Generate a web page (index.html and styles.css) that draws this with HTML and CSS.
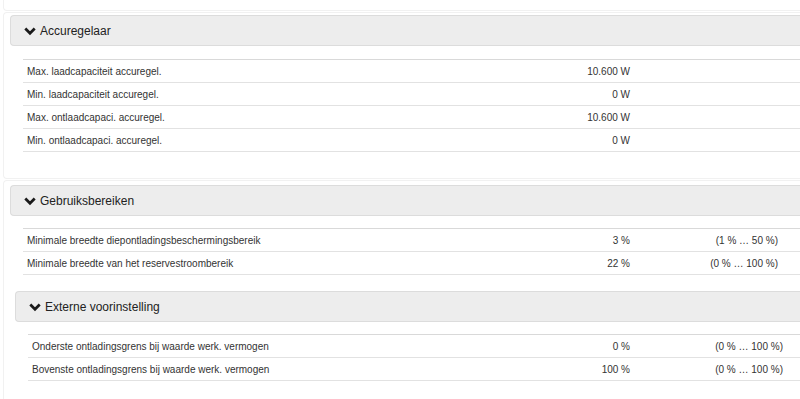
FILE: index.html
```html
<!DOCTYPE html>
<html lang="nl">
<head>
<meta charset="utf-8">
<title>Accuregelaar</title>
<link rel="stylesheet" href="styles.css">
</head>
<body>
<div class="page">
  <div class="card card-stub"></div>

  <div class="card card-b">
    <div class="panel-head">
      <svg class="chev" viewBox="0 0 12 9" width="12" height="9"><path d="M1.3 1.5 L6 6.3 L10.7 1.5" fill="none" stroke="#1a1a1a" stroke-width="2.7"/></svg>
      <span>Accuregelaar</span>
    </div>
    <div class="tbl tbl-b">
      <div class="row"><span class="lbl">Max. laadcapaciteit accuregel.</span><span class="val">10.600 W</span><span class="rng"></span></div>
      <div class="row"><span class="lbl">Min. laadcapaciteit accuregel.</span><span class="val">0 W</span><span class="rng"></span></div>
      <div class="row"><span class="lbl">Max. ontlaadcapaci. accuregel.</span><span class="val">10.600 W</span><span class="rng"></span></div>
      <div class="row"><span class="lbl">Min. ontlaadcapaci. accuregel.</span><span class="val">0 W</span><span class="rng"></span></div>
    </div>
  </div>

  <div class="card card-c">
    <div class="panel-head">
      <svg class="chev" viewBox="0 0 12 9" width="12" height="9"><path d="M1.3 1.5 L6 6.3 L10.7 1.5" fill="none" stroke="#1a1a1a" stroke-width="2.7"/></svg>
      <span>Gebruiksbereiken</span>
    </div>
    <div class="tbl">
      <div class="row"><span class="lbl">Minimale breedte diepontladingsbeschermingsbereik</span><span class="val">3 %</span><span class="rng">(1 % … 50 %)</span></div>
      <div class="row"><span class="lbl">Minimale breedte van het reservestroombereik</span><span class="val">22 %</span><span class="rng">(0 % … 100 %)</span></div>
    </div>

    <div class="card card-d">
      <div class="panel-head">
        <svg class="chev" viewBox="0 0 12 9" width="12" height="9"><path d="M1.3 1.5 L6 6.3 L10.7 1.5" fill="none" stroke="#1a1a1a" stroke-width="2.7"/></svg>
        <span>Externe voorinstelling</span>
      </div>
      <div class="tbl tbl-d">
        <div class="row"><span class="lbl">Onderste ontladingsgrens bij waarde werk. vermogen</span><span class="val">0 %</span><span class="rng">(0 % … 100 %)</span></div>
        <div class="row"><span class="lbl">Bovenste ontladingsgrens bij waarde werk. vermogen</span><span class="val">100 %</span><span class="rng">(0 % … 100 %)</span></div>
      </div>
    </div>
  </div>
</div>
</body>
</html>
```
FILE: styles.css
```css
html, body {
  margin: 0;
  padding: 0;
  background: #fff;
  overflow: hidden;
}
body {
  font-family: "Liberation Sans", Arial, sans-serif;
  color: #333;
}
.page {
  padding-left: 3px;
}
.card {
  border: 1px solid #f1f1f1;
  border-right: none;
  border-radius: 4px 0 0 4px;
  padding: 0 0 0 6px;
}
.card-stub {
  height: 10px;
  border-top: none;
  border-radius: 0 0 0 4px;
}
.card-b {
  margin-top: 1px;
  padding-top: 2px;
  padding-bottom: 26px;
}
.card-c {
  margin-top: 1px;
  padding-top: 4px;
  padding-bottom: 30px;
}
.card-d {
  margin-top: 16px;
  margin-left: -1px;
  border: none;
  padding: 0 0 0 6px;
}
.panel-head {
  display: flex;
  align-items: center;
  height: 29px;
  border: 1px solid #dcdcdc;
  border-right: none;
  border-radius: 4px 0 0 4px;
  background: #ededed;
  padding-left: 13px;
  font-size: 12px;
  color: #222;
}
.chev {
  margin-right: 4px;
  margin-top: 1px;
}
.tbl {
  margin: 12px 0 0 13px;
  font-size: 10px;
  color: #333;
}
.tbl-b {
  margin-top: 13px;
}
.row {
  display: grid;
  grid-template-columns: 517px 94px 148px 1fr;
  height: 22px;
  align-items: center;
  border-top: 1px solid #e2e2e2;
}
.row:last-child {
  border-bottom: 1px solid #e2e2e2;
}
.row:first-child {
  border-top-color: #d9d9d9;
}
.lbl {
  padding-left: 4px;
}
.val, .rng {
  text-align: right;
  padding-right: 4px;
}
.tbl-d .row {
  grid-template-columns: 512px 94px 153px 1fr;
}
```
